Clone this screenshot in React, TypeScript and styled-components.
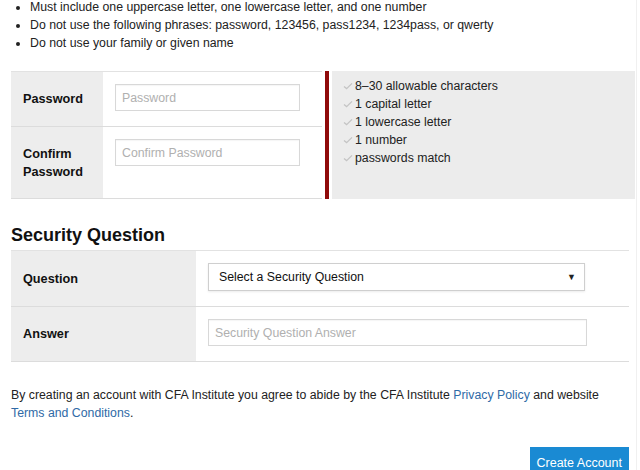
import styled, { createGlobalStyle } from 'styled-components';

const GlobalStyle = createGlobalStyle`
  body {
    margin: 0;
    background: #fff;
    font-family: "Liberation Sans", Arial, sans-serif;
    font-size: 12.3px;
    color: #222;
  }
`;

const Page = styled.div`
  width: 618px;
  min-height: 470px;
  padding: 0 7px 0 11px;
  border-right: 1px solid #f0f0f0;
  overflow: hidden;
`;

const Rules = styled.ul`
  margin: -2px 0 0;
  padding: 0 0 0 19px;
  line-height: 18px;
  color: #222;
`;

const Rule = styled.li`
  padding-left: 0;
`;

const PasswordSection = styled.div`
  display: grid;
  grid-template-columns: 311px 4px 303px;
  column-gap: 3px;
  margin-top: 19px;
  margin-right: -7px;
`;

const FieldTable = styled.div<{ $labelWidth: number }>`
  display: grid;
  grid-template-columns: ${p => p.$labelWidth}px 1fr;
  border-top: 1px solid #e2e2e2;
`;

const Label = styled.div<{ $height: number }>`
  display: flex;
  align-items: center;
  height: ${p => p.$height}px;
  padding-left: 12px;
  background: #ededed;
  border-bottom: 1px solid #dcdcdc;
  font-size: 12.7px;
  font-weight: bold;
  line-height: 18px;
  color: #111;
`;

const Cell = styled.div<{ $top: number }>`
  padding: ${p => p.$top}px 0 0 12px;
  border-bottom: 1px solid #dcdcdc;
`;

const TextInput = styled.input<{ $width: number; $height: number }>`
  box-sizing: border-box;
  display: block;
  width: ${p => p.$width}px;
  height: ${p => p.$height}px;
  padding: 0 6px;
  border: 1px solid #d8d8d8;
  box-shadow: inset 0 1px 1px rgba(0, 0, 0, 0.04);
  font-family: inherit;
  font-size: 12.3px;
  color: #333;
  &::placeholder {
    color: #b0b0b0;
  }
`;

const RedBar = styled.div`
  background: #8f0a0a;
`;

const HintPanel = styled.ul`
  margin: 0;
  padding: 6px 0 0 11px;
  list-style: none;
  background: #ececec;
  line-height: 18px;
  color: #222;
`;

const Hint = styled.li`
  display: flex;
  align-items: center;
  gap: 2px;
`;

const Check = () => (
  <svg width="10" height="8" viewBox="0 0 10 8">
    <path d="M1 4.4 L3.6 6.6 L9 1.4" fill="none" stroke="#c4c4c4" strokeWidth="1.3" />
  </svg>
);

const Heading = styled.h2`
  margin: 25px 0 0;
  font-size: 18px;
  line-height: 22px;
  font-weight: bold;
  color: #111;
`;

const QuestionTable = styled(FieldTable)`
  margin-top: 4px;
`;

const SelectBox = styled.div`
  box-sizing: border-box;
  display: flex;
  align-items: center;
  justify-content: space-between;
  width: 377px;
  height: 28px;
  padding: 0 8px 0 10px;
  border: 1px solid #cfcfcf;
  box-shadow: 0 1px 2px rgba(0, 0, 0, 0.08);
  color: #111;
`;

const Caret = styled.span`
  font-size: 9px;
  color: #222;
`;

const Terms = styled.p`
  margin: 24px 0 0;
  line-height: 18px;
  color: #222;
`;

const Link = styled.a`
  color: #2f6aa6;
  text-decoration: none;
`;

const Actions = styled.div`
  display: flex;
  justify-content: flex-end;
  margin-top: 25px;
`;

const Button = styled.button`
  height: 32px;
  padding: 0 7px;
  border: none;
  background: #1a8ad3;
  color: #fff;
  font-family: inherit;
  font-size: 12.5px;
`;

const hints = [
  '8–30 allowable characters',
  '1 capital letter',
  '1 lowercase letter',
  '1 number',
  'passwords match',
];

export default function App() {
  return (
    <>
      <GlobalStyle />
      <Page>
        <Rules>
          <Rule>Must include one uppercase letter, one lowercase letter, and one number</Rule>
          <Rule>Do not use the following phrases: password, 123456, pass1234, 1234pass, or qwerty</Rule>
          <Rule>Do not use your family or given name</Rule>
        </Rules>

        <PasswordSection>
          <FieldTable $labelWidth={92}>
            <Label $height={54}>Password</Label>
            <Cell $top={12}>
              <TextInput $width={185} $height={27} placeholder="Password" />
            </Cell>
            <Label $height={71}>Confirm<br />Password</Label>
            <Cell $top={12}>
              <TextInput $width={185} $height={27} placeholder="Confirm Password" />
            </Cell>
          </FieldTable>
          <RedBar />
          <HintPanel>
            {hints.map(h => (
              <Hint key={h}>
                <Check />
                {h}
              </Hint>
            ))}
          </HintPanel>
        </PasswordSection>

        <Heading>Security Question</Heading>
        <QuestionTable $labelWidth={185}>
          <Label $height={55}>Question</Label>
          <Cell $top={12}>
            <SelectBox>
              Select a Security Question
              <Caret>▼</Caret>
            </SelectBox>
          </Cell>
          <Label $height={54}>Answer</Label>
          <Cell $top={12}>
            <TextInput $width={379} $height={27} placeholder="Security Question Answer" />
          </Cell>
        </QuestionTable>

        <Terms>
          By creating an account with CFA Institute you agree to abide by the CFA Institute{' '}
          <Link href="#">Privacy Policy</Link> and website <Link href="#">Terms and Conditions</Link>.
        </Terms>

        <Actions>
          <Button>Create Account</Button>
        </Actions>
      </Page>
    </>
  );
}
